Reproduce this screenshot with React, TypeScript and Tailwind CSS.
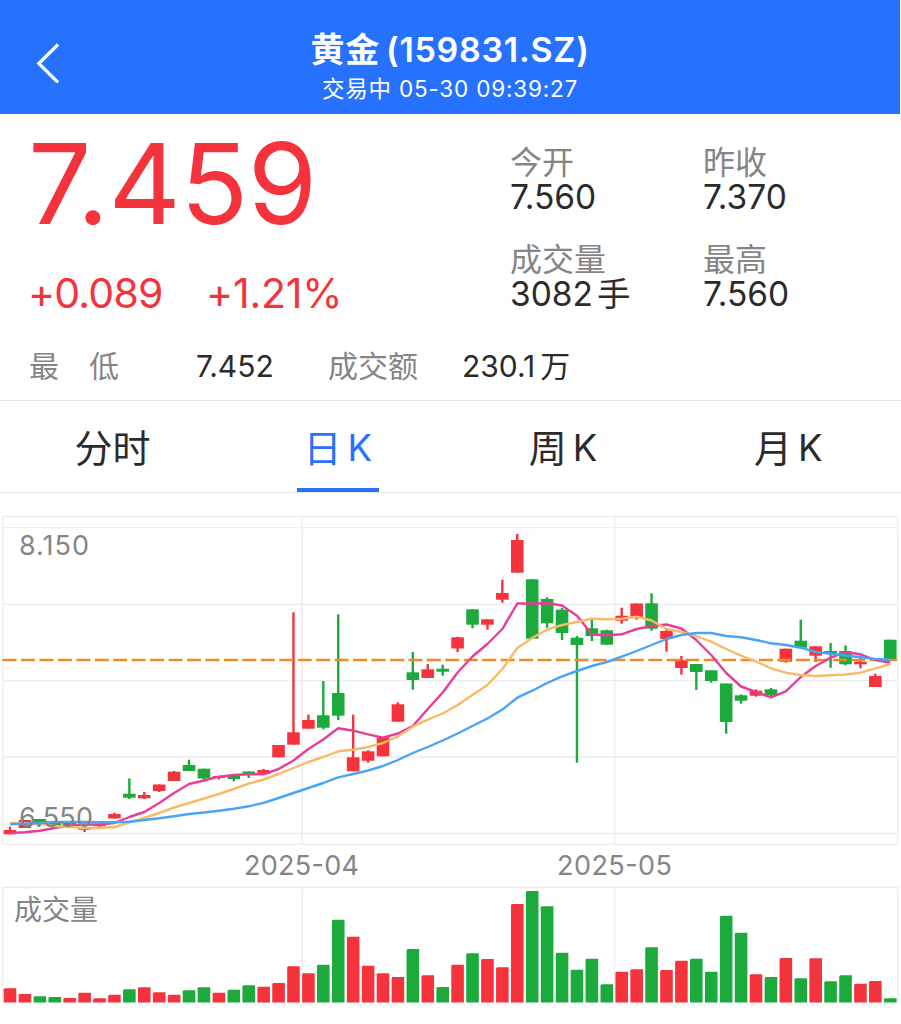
import React from 'react';

// high, body top, body bottom, low, volume top, direction
type Candle = [number, number, number, number, number, 'up' | 'down'];

const candles: Candle[] = [
  [826.7, 830, 834.3, 834.3, 988.3, 'up'],
  [820, 820, 828, 828, 994, 'up'],
  [819, 819, 822.5, 822.5, 996.3, 'down'],
  [822, 822, 825.3, 825.3, 997, 'down'],
  [822.5, 822.5, 825.5, 825.5, 998, 'up'],
  [827, 827, 829.7, 832, 992.7, 'up'],
  [824.5, 824.5, 826.3, 827.5, 998.3, 'up'],
  [812.7, 814, 818.5, 818.5, 994.7, 'up'],
  [778.5, 793.7, 797.7, 799, 989.3, 'down'],
  [792, 795, 798.3, 799, 987.3, 'up'],
  [784.5, 784.5, 791, 792, 992.3, 'up'],
  [771, 771.7, 781, 781, 994.7, 'up'],
  [759.7, 765, 771, 771, 990.3, 'down'],
  [768.7, 768.7, 778.5, 779.5, 987.3, 'down'],
  [776, 776, 778, 779.5, 992.7, 'up'],
  [776, 776, 779, 781.3, 989.7, 'down'],
  [771.5, 771.5, 774.3, 778, 985.3, 'down'],
  [769, 770, 774, 774, 986.7, 'up'],
  [745, 745, 757.3, 757.3, 983, 'up'],
  [612.3, 732.3, 744.7, 744.7, 966.3, 'up'],
  [714.7, 720, 728.7, 728.7, 973.3, 'up'],
  [681, 715.3, 727.7, 729.3, 964.7, 'down'],
  [614.3, 693, 715.7, 720, 919.7, 'down'],
  [714.7, 757.3, 771.3, 771.3, 936.7, 'up'],
  [750.3, 751.3, 760.7, 762.7, 965.7, 'up'],
  [737.3, 737.3, 756.3, 756.3, 973.3, 'up'],
  [702.3, 704.3, 721.7, 721.7, 977, 'up'],
  [652, 672.3, 680, 689.7, 949, 'down'],
  [664, 669.3, 678, 678, 975.3, 'up'],
  [664.7, 668.7, 671.7, 675.7, 987, 'down'],
  [636.7, 637.3, 648.5, 652, 964.7, 'up'],
  [609.3, 609.3, 624.7, 628.3, 953.3, 'down'],
  [619.3, 619.3, 624.7, 629.7, 959, 'up'],
  [579.7, 593, 599.7, 602.7, 967.3, 'up'],
  [534, 540, 572.7, 572.7, 904, 'up'],
  [579.3, 579.3, 638.7, 638.7, 891, 'down'],
  [597.3, 599, 623.3, 627.7, 906.3, 'down'],
  [608, 609.7, 633, 640, 952.7, 'down'],
  [636, 637.7, 645, 762.7, 969.7, 'down'],
  [620, 628.3, 636, 641, 958.7, 'down'],
  [629.7, 630.3, 644.7, 644.7, 984.3, 'down'],
  [607.7, 615.7, 620.7, 623.7, 971.7, 'up'],
  [603.5, 603.5, 617.7, 619.5, 969.3, 'up'],
  [593.3, 603.3, 628.7, 630.7, 947.3, 'down'],
  [630, 631, 639, 651.7, 970, 'up'],
  [656, 660.3, 668, 674.7, 960.7, 'up'],
  [664, 664, 672, 690, 958.7, 'down'],
  [670.3, 670.3, 681, 682.7, 971.7, 'down'],
  [683.5, 683.5, 722, 733.7, 915.7, 'down'],
  [694.3, 695.3, 700.7, 703.7, 932.7, 'down'],
  [689.3, 690.7, 695.7, 696.7, 974.3, 'up'],
  [688, 689.3, 695, 696, 977, 'down'],
  [648.7, 648.7, 661.7, 662.7, 958, 'up'],
  [619.7, 640.7, 647.7, 647.7, 978.3, 'down'],
  [646.3, 646.3, 655.7, 662, 958.3, 'up'],
  [643, 651, 653.7, 667.7, 981.3, 'down'],
  [645.3, 651, 664.3, 665.3, 975.3, 'down'],
  [658, 661.7, 664.3, 668.3, 983.7, 'up'],
  [673.7, 676, 687, 687, 981, 'up'],
  [639.7, 639.7, 660.7, 660.7, 998.3, 'down'],
];

const ma5 = [
  833, 832.3, 830.7, 828, 825.5, 824.5, 824.5, 823, 817, 812, 803, 793, 784, 780.5, 776.7, 775, 774.3, 774.3, 769, 760.5,
  749, 739.5, 728.3, 730.7, 734.3, 737.7, 733.5, 726, 709, 692.5, 672.5, 656.5, 644, 629, 603.5, 603.5, 603.3, 605.5,
  615.7, 634.3, 635.5, 634.3, 629, 626, 624.5, 628.5, 640, 655, 673, 686.5, 692, 697.3, 691.3, 677, 666, 657.7, 652.3,
  654.3, 660, 662.7,
];

const ma10 = [
  823, 823.3, 824, 826, 827, 828, 828, 827, 822.5, 818, 813, 807.5, 803, 798.5, 794, 789, 783.7, 779.5, 774, 768, 762,
  757, 751.3, 749.7, 747, 743, 736.5, 726.7, 719.7, 713.5, 705, 695, 685, 669, 648, 638, 629.5, 625, 622, 618.7, 619.3,
  618.7, 616.7, 620.5, 629, 632, 636, 641.7, 649, 655.7, 661.5, 668.3, 672.7, 675, 676, 675.3, 674.5, 672.7, 668.3, 664,
];

const ma20 = [
  824.3, 823.7, 823, 822, 822, 822, 822.3, 822.3, 821.7, 820, 818.3, 816.3, 814, 812.5, 810.7, 808.7, 806.3, 802.9, 798,
  793, 788, 783, 777.3, 774, 770.5, 766, 760, 753, 747, 740.5, 733.5, 726, 718.5, 709.5, 697.7, 690.7, 683, 676.3, 671,
  666, 662, 656.7, 651, 645, 639, 635, 633, 633, 636, 637.3, 640, 643.3, 645, 647.7, 652, 653.7, 655.5, 657.3, 659,
  659.7,
];

const averages = [
  { values: ma5, color: '#e83e98' },
  { values: ma10, color: '#f7bb68' },
  { values: ma20, color: '#48a5f5' },
];

const stats = [
  { label: '今开', value: '7.560' },
  { label: '昨收', value: '7.370' },
  { label: '成交量', value: '3082', unit: '手' },
  { label: '最高', value: '7.560' },
];

const tabs = [
  { label: '分时', suffix: '' },
  { label: '日', suffix: 'K', active: true },
  { label: '周', suffix: 'K' },
  { label: '月', suffix: 'K' },
];

const RED = '#f5333c';
const GREEN = '#1caa3c';
const xAt = (i: number) => 10 + i * 14.92;
const toPoints = (values: number[]) => values.map((y, i) => `${xAt(i).toFixed(1)},${y}`).join(' ');

function Header() {
  return (
    <header className="flex h-[114px] w-[900px] items-center bg-[#2672ff] text-white">
      <button className="flex w-[100px] items-center pt-3 pl-9" aria-label="back">
        <svg width="24" height="40" viewBox="0 0 24 40" fill="none" stroke="currentColor" strokeWidth="3.2">
          <path d="M22 1.5 2.8 20.5 22 39.5" />
        </svg>
      </button>
      <div className="flex flex-1 flex-col items-center pt-3.5 pr-[100px]">
        <h1 className="flex gap-1.5 text-[34px] leading-[50px] font-semibold">
          <span className="tracking-[0.8px]">黄金</span>
          <span className="tracking-[0.7px]">(159831.SZ)</span>
        </h1>
        <p className="text-[22.5px] leading-7 tracking-[0.8px]">交易中 05-30 09:39:27</p>
      </div>
    </header>
  );
}

function Quote() {
  return (
    <section className="h-[287px] border-b border-[#e8e8e8]">
      <div className="flex h-[218px]">
        <div className="w-[510px] pt-[13px] pl-7 text-[#f5333c]">
          <div className="text-[112px] leading-[112px] tracking-[-0.6px]">7.459</div>
          <div className="mt-[27px] flex text-[41px] leading-[54px]">
            <span className="w-[178px] tracking-[-0.8px]">+0.089</span>
            <span className="tracking-[-0.2px]">+1.21%</span>
          </div>
        </div>
        <div className="grid auto-rows-min grid-cols-[193px_180px] gap-y-7 pt-8">
          {stats.map(({ label, value, unit }) => (
            <div key={label}>
              <div className="text-[32px] leading-[34px] text-[#858585]">{label}</div>
              <div className="flex gap-1 text-[33.5px] leading-[35px] text-[#2b2b2b]">
                <span>{value}</span>
                {unit && <span>{unit}</span>}
              </div>
            </div>
          ))}
        </div>
      </div>
      <div className="flex items-center pl-[29px] text-[30px] leading-[68px] text-[#2b2b2b]">
        <span className="flex w-[167px] gap-[30px] text-[#858585]">
          <span>最</span>
          <span>低</span>
        </span>
        <span className="w-[132px]">7.452</span>
        <span className="w-[134px] text-[#858585]">成交额</span>
        <span>230.1</span>
        <span className="pl-[5px]">万</span>
      </div>
    </section>
  );
}

function Tabs() {
  return (
    <nav className="grid h-[92px] w-[901px] grid-cols-4 border-b border-[#e8e8e8]">
      {tabs.map(({ label, suffix, active }) => (
        <button
          key={label}
          className={`flex h-[92px] flex-col items-center ${active ? 'text-[#2672ff]' : 'text-[#2b2b2b]'}`}
        >
          <span className="flex h-[87px] gap-1.5">
            <span className="text-[38px] leading-[95px]">{label}</span>
            {suffix && <span className="text-[36.5px] leading-[94px]">{suffix}</span>}
          </span>
          {active && <span className="h-1 w-[82px] bg-[#2672ff]" />}
        </button>
      ))}
    </nav>
  );
}

function Chart() {
  return (
    <svg width="901" height="531" viewBox="0 493 901 531" className="block">
      <g fill="none" stroke="#ededed" strokeWidth="1.3">
        <rect x="2.7" y="516.5" width="895" height="327.8" />
        <path d="M2.7 1002V887.5H897.7V1002" />
        {[527.7, 604.3, 680.7, 757, 833.3].map((y) => (
          <path key={y} d={`M2.7 ${y}H897.7`} />
        ))}
        {[302.3, 614.7].map((x) => (
          <path key={x} d={`M${x} 516.5V844.3M${x} 887.5V1002`} />
        ))}
      </g>

      {candles.map(([high, top, bottom, low, volume, dir], i) => {
        const fill = dir === 'up' ? RED : GREEN;
        return (
          <g key={i} fill={fill}>
            <rect x={xAt(i) - 1.2} y={high} width="2.4" height={low - high} />
            <rect x={xAt(i) - 6.3} y={top} width="12.6" height={bottom - top} />
            <path d={`M${xAt(i) - 6.3} 1002.5V${volume + 1}l1-1h11.6V1002.5z`} />
          </g>
        );
      })}

      <path d="M2.5 660H897" stroke="#ed8b29" strokeWidth="2.6" strokeDasharray="14 4.45" />
      {averages.map(({ values, color }) => (
        <polyline
          key={color}
          points={toPoints(values)}
          fill="none"
          stroke={color}
          strokeWidth="2.4"
          strokeLinejoin="round"
        />
      ))}

      <g fill="#858585" fontSize="27">
        <text x="19" y="555" textLength="70">8.150</text>
        <text x="19" y="827" textLength="74">6.550</text>
        <text x="244" y="875" textLength="115">2025-04</text>
        <text x="557" y="875" textLength="115">2025-05</text>
        <text x="14" y="920" fontSize="28">成交量</text>
      </g>
    </svg>
  );
}

export default function App() {
  return (
    <div className="h-[1024px] w-[901px] overflow-hidden bg-white font-['Inter','Noto_Sans_CJK_SC',sans-serif]">
      <Header />
      <Quote />
      <Tabs />
      <Chart />
    </div>
  );
}
